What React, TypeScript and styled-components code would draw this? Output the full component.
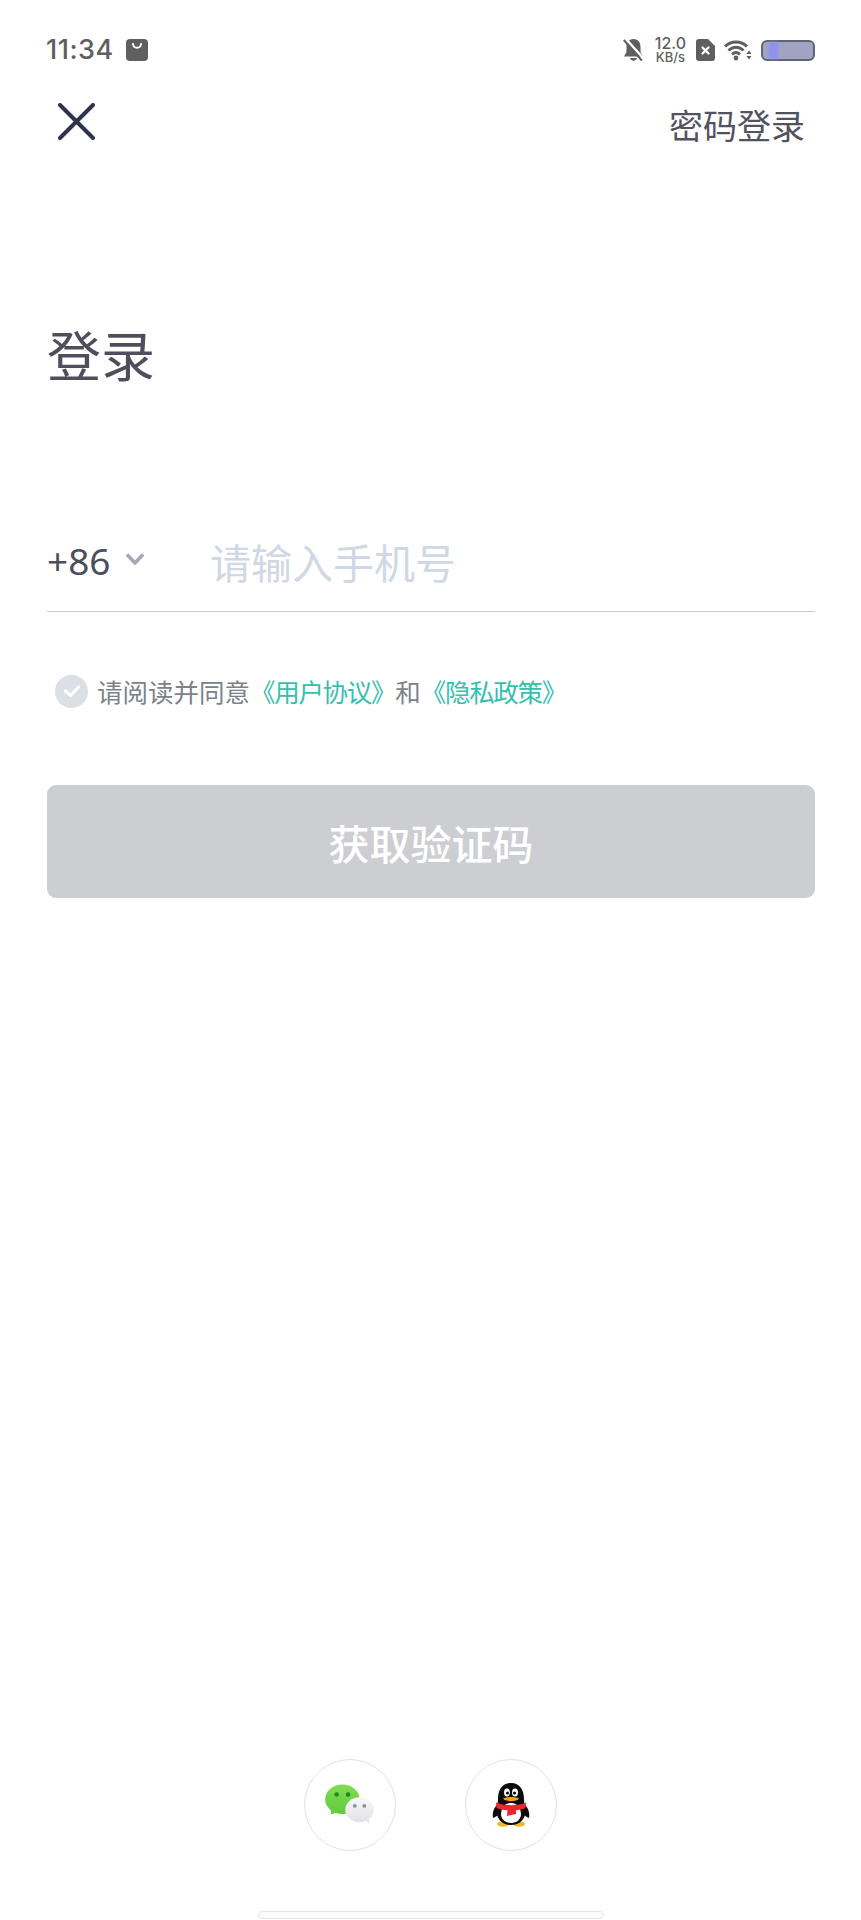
import styled, { createGlobalStyle } from 'styled-components'

const GlobalStyle = createGlobalStyle`
  html, body {
    margin: 0;
    padding: 0;
    background: #fff;
  }
  * {
    box-sizing: border-box;
  }
`

export default function App() {
  return (
    <>
      <GlobalStyle />
      <Page>
        <StatusBar>
          <StatusLeft>
            <Time>11:34</Time>
            <BagIcon />
          </StatusLeft>
          <StatusRight>
            <BellIcon />
            <Speed>
              <SpeedValue>12.0</SpeedValue>
              <SpeedUnit>KB/s</SpeedUnit>
            </Speed>
            <SimIcon />
            <WifiIcon />
            <Battery>
              <BatteryLevel />
            </Battery>
          </StatusRight>
        </StatusBar>

        <TopBar>
          <CloseButton type="button" aria-label="关闭">
            <svg width="37" height="37" viewBox="0 0 37 37" fill="none">
              <path d="M2 2 L35 35 M35 2 L2 35" stroke="#2f3350" strokeWidth="4" strokeLinecap="round" />
            </svg>
          </CloseButton>
          <PasswordLogin>密码登录</PasswordLogin>
        </TopBar>

        <Title>登录</Title>

        <PhoneRow>
          <CountryCode>
            +86
            <svg width="20" height="14" viewBox="0 0 20 14" fill="none">
              <path d="M2 2.5 L10 11 L18 2.5" stroke="#a3aab6" strokeWidth="3.6" strokeLinejoin="round" />
            </svg>
          </CountryCode>
          <PhoneInput placeholder="请输入手机号" />
        </PhoneRow>

        <Agreement>
          <CheckMark>
            <svg width="18" height="14" viewBox="0 0 18 14" fill="none">
              <path d="M2.5 7 L7.5 11.5 L15.5 3" stroke="#fff" strokeWidth="3.2" strokeLinecap="round" strokeLinejoin="round" />
            </svg>
          </CheckMark>
          <AgreementText>
            请阅读并同意<DocLink>《用户协议》</DocLink>和<DocLink>《隐私政策》</DocLink>
          </AgreementText>
        </Agreement>

        <SubmitButton type="button">获取验证码</SubmitButton>

        <SocialRow>
          <SocialButton type="button" aria-label="微信">
            <WeChatLogo />
          </SocialButton>
          <SocialButton type="button" aria-label="QQ">
            <QQLogo />
          </SocialButton>
        </SocialRow>

        <HomeBar />
      </Page>
    </>
  )
}

function BagIcon() {
  return (
    <svg width="22" height="22" viewBox="0 0 22 22">
      <rect width="22" height="22" rx="4" fill="#5f5f5f" />
      <path d="M7 5 C7.5 10 14.5 10 15 5" stroke="#fff" strokeWidth="2" fill="none" strokeLinecap="round" />
    </svg>
  )
}

function BellIcon() {
  return (
    <svg width="21" height="24" viewBox="0 0 21 24">
      <path d="M10.5 1 C5.5 1 3.5 5 3.5 9 L3.5 14 L1 18.5 L20 18.5 L17.5 14 L17.5 9 C17.5 5 15.5 1 10.5 1 Z" fill="#5f5f5f" />
      <path d="M7 20 C8 23.5 13 23.5 14 20 Z" fill="#5f5f5f" />
      <path d="M2.5 0.5 L21 21" stroke="#fff" strokeWidth="2.4" />
      <path d="M0.8 2 L18.8 22.5" stroke="#5f5f5f" strokeWidth="2" />
    </svg>
  )
}

function SimIcon() {
  return (
    <svg width="19" height="22" viewBox="0 0 19 22">
      <path d="M3 0 L12 0 L19 7 L19 19 Q19 22 16 22 L3 22 Q0 22 0 19 L0 3 Q0 0 3 0 Z" fill="#5f5f5f" />
      <path d="M6.5 8.5 L12.5 14.5 M12.5 8.5 L6.5 14.5" stroke="#fff" strokeWidth="2.4" strokeLinecap="round" />
    </svg>
  )
}

function WifiIcon() {
  return (
    <svg width="28" height="21" viewBox="0 0 28 21" fill="none">
      <path d="M1 6.5 C7 0.5 17 0.5 23 6.5" stroke="#5f5f5f" strokeWidth="3" />
      <path d="M4.5 10.5 C9 6 15 6 19.5 10.5" stroke="#5f5f5f" strokeWidth="3" />
      <path d="M8 14.5 C10.5 12 13.5 12 16 14.5" stroke="#5f5f5f" strokeWidth="2.6" />
      <circle cx="12" cy="18" r="2.4" fill="#5f5f5f" />
      <path d="M25 10.5 L27.5 14 L22.5 14 Z M22.5 16 L27.5 16 L25 19.5 Z" fill="#5f5f5f" />
    </svg>
  )
}

function WeChatLogo() {
  return (
    <svg width="52" height="42" viewBox="0 0 52 44">
      <defs>
        <linearGradient id="wechatGreen" x1="0" y1="0" x2="0" y2="1">
          <stop offset="0" stopColor="#82dc52" />
          <stop offset="1" stopColor="#5ecb3c" />
        </linearGradient>
        <linearGradient id="wechatWhite" x1="0" y1="0" x2="0" y2="1">
          <stop offset="0" stopColor="#f7f7f9" />
          <stop offset="1" stopColor="#e2e3e8" />
        </linearGradient>
      </defs>
      <ellipse cx="18" cy="16" rx="18" ry="15.5" fill="url(#wechatGreen)" />
      <path d="M6 26 L6 32 L14 29 Z" fill="#66cf42" />
      <circle cx="12" cy="11" r="2.4" fill="#1f8a1c" />
      <circle cx="24" cy="11" r="2.4" fill="#1f8a1c" />
      <ellipse cx="36" cy="27" rx="15" ry="13" fill="url(#wechatWhite)" />
      <path d="M41 37 L46 42 L46 34 Z" fill="#e4e5ea" />
      <circle cx="31" cy="23" r="2" fill="#8e9098" />
      <circle cx="41" cy="23" r="2" fill="#8e9098" />
    </svg>
  )
}

function QQLogo() {
  return (
    <svg width="38" height="44" viewBox="0 0 38 44">
      <ellipse cx="11" cy="41" rx="6" ry="2.8" fill="#f3b81f" />
      <ellipse cx="27" cy="41" rx="6" ry="2.8" fill="#f3b81f" />
      <path d="M7 20 C2 24 0 29 1 35 C4 34 6 32 7 30 Z" fill="#0c0c0e" />
      <path d="M31 20 C36 24 38 29 37 35 C34 34 32 32 31 30 Z" fill="#0c0c0e" />
      <path d="M19 0 C10 0 6 7 6 16 C6 22 4 28 5 32 C7 39 13 42 19 42 C25 42 31 39 33 32 C34 28 32 22 32 16 C32 7 28 0 19 0 Z" fill="#0c0c0e" />
      <path d="M19 20 C12 20 9 26 9 32 C10 38 15 40 19 40 C23 40 28 38 29 32 C29 26 26 20 19 20 Z" fill="#fff" />
      <ellipse cx="15" cy="9.5" rx="3" ry="4" fill="#fff" />
      <ellipse cx="23" cy="9.5" rx="3" ry="4" fill="#fff" />
      <circle cx="15.5" cy="10" r="1.6" fill="#0c0c0e" />
      <circle cx="22.5" cy="10" r="1.6" fill="#0c0c0e" />
      <path d="M11 15.5 C15 13.5 23 13.5 27 15.5 C25 19 13 19 11 15.5 Z" fill="#f0a51e" />
      <path d="M4 19.5 C12 23 26 23 34 19.5 L33.5 25 C30 26.5 27 27 24 27.2 L24 31 L15 33 L15.5 27.2 C11 27 7 26 4.5 25 Z" fill="#e8262d" />
    </svg>
  )
}

/* ─── Styles ─── */

const Page = styled.div`
  display: flex;
  flex-direction: column;
  width: 861px;
  height: 1920px;
  padding: 0 46px 0 47px;
  overflow: hidden;
  background: #fff;
  font-family: "Noto Sans CJK SC", "Noto Sans", sans-serif;
`

const StatusBar = styled.div`
  display: flex;
  align-items: center;
  justify-content: space-between;
  height: 24px;
  margin-top: 38px;
`

const StatusLeft = styled.div`
  display: flex;
  align-items: center;
  gap: 12px;
  margin-left: -1px;
`

const Time = styled.span`
  font-family: Inter, sans-serif;
  font-size: 27px;
  font-weight: 500;
  line-height: 24px;
  letter-spacing: 0.5px;
  color: #5f5f5f;
`

const StatusRight = styled.div`
  display: flex;
  align-items: center;
  gap: 9px;
`

const Speed = styled.div`
  display: flex;
  flex-direction: column;
  align-items: center;
  gap: 1px;
  margin: 0 1px 0 2px;
  font-family: Inter, sans-serif;
  color: #5f5f5f;
`

const SpeedValue = styled.span`
  font-size: 16px;
  font-weight: 500;
  line-height: 14px;
`

const SpeedUnit = styled.span`
  font-size: 13px;
  font-weight: 500;
  line-height: 13px;
`

const Battery = styled.div`
  width: 54px;
  height: 21px;
  padding: 0 0 0 6px;
  border: 2px solid #5e6478;
  border-radius: 6px;
  background: #a0a4c2;
`

const BatteryLevel = styled.div`
  width: 9px;
  height: 100%;
  background: #8f92ee;
  filter: blur(1px);
`

const TopBar = styled.div`
  display: flex;
  align-items: center;
  justify-content: space-between;
  height: 40px;
  margin-top: 39px;
  padding: 0 10px 0 11px;
`

const CloseButton = styled.button`
  display: flex;
  width: 37px;
  height: 37px;
  padding: 0;
  border: none;
  background: none;
`

const PasswordLogin = styled.span`
  margin-top: 8px;
  font-size: 34px;
  line-height: 40px;
  color: #53535f;
`

const Title = styled.h1`
  margin: 178px 0 0;
  font-size: 54px;
  font-weight: 400;
  line-height: 70px;
  color: #4e4e5c;
`

const PhoneRow = styled.div`
  display: flex;
  align-items: center;
  height: 88px;
  margin-top: 135px;
  padding-bottom: 14px;
  border-bottom: 1.5px solid #c6cbd1;
`

const CountryCode = styled.div`
  display: flex;
  align-items: center;
  gap: 14px;
  width: 163px;
  flex-shrink: 0;
  font-family: "Noto Sans", sans-serif;
  font-size: 37px;
  line-height: 48px;
  color: #4d4e5c;

  svg {
    margin-top: -4px;
  }
`

const PhoneInput = styled.input`
  flex: 1;
  min-width: 0;
  padding: 0;
  border: none;
  outline: none;
  background: none;
  font-family: inherit;
  font-size: 41px;
  line-height: 48px;

  &::placeholder {
    color: #d0d7e5;
    opacity: 1;
  }
`

const Agreement = styled.div`
  display: flex;
  align-items: center;
  gap: 9px;
  height: 34px;
  margin-top: 62px;
  padding-left: 8px;
`

const CheckMark = styled.div`
  display: flex;
  align-items: center;
  justify-content: center;
  width: 33px;
  height: 33px;
  flex-shrink: 0;
  border-radius: 50%;
  background: #dcdfe5;
`

const AgreementText = styled.span`
  font-size: 25.5px;
  line-height: 34px;
  white-space: nowrap;
  color: #7c8289;
`

const DocLink = styled.span`
  letter-spacing: -1.3px;
  color: #35c0ae;
`

const SubmitButton = styled.button`
  width: 100%;
  height: 113px;
  margin-top: 77px;
  padding: 0;
  border: none;
  border-radius: 9px;
  background: #cdced2;
  color: #fff;
  font-family: inherit;
  font-size: 41px;
  font-weight: 500;
`

const SocialRow = styled.div`
  display: flex;
  justify-content: center;
  gap: 69px;
  margin-top: auto;
  padding-right: 1px;
`

const SocialButton = styled.button`
  display: flex;
  align-items: center;
  justify-content: center;
  width: 92px;
  height: 92px;
  padding: 0;
  border: 1.5px solid #e2e2e2;
  border-radius: 50%;
  background: #fff;
`

const HomeBar = styled.div`
  align-self: center;
  width: 346px;
  height: 8px;
  margin: 60px 0 1px;
  border: 1.5px solid #e6e6e6;
  border-radius: 4px;
  background: #fbfbfb;
`
